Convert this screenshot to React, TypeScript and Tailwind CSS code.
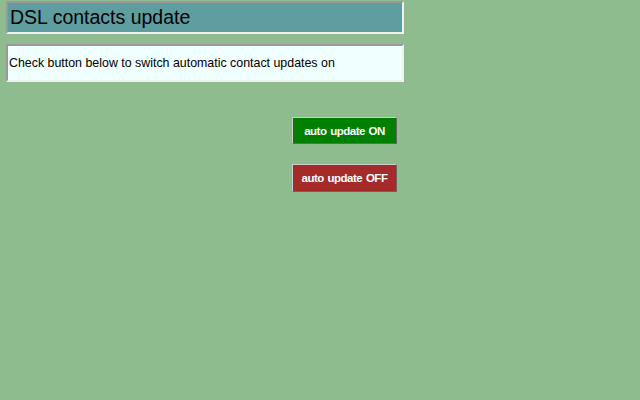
export default function App() {
  return (
    <div className="w-[640px] h-[400px] bg-[#8fbc8f] pl-[6px] pt-[1px] font-['Liberation_Sans',Arial,sans-serif]">
      <div className="w-[398px] flex flex-col">
        <div className="h-[33px] bg-[#5f9ea0] border-2 border-t-[#999999] border-l-[#999999] border-b-[#f0f0f0] border-r-[#f0f0f0] flex items-center pl-[2px]">
          <h1 className="text-[19.5px] leading-none text-black">DSL contacts update</h1>
        </div>
        <div className="mt-[10px] h-[38px] bg-[#f0ffff] border-2 border-t-[#999999] border-l-[#999999] border-b-[#f0f0f0] border-r-[#f0f0f0] flex items-center pl-[1px]">
          <p className="text-[12.4px] leading-none text-black">
            Check button below to switch automatic contact updates on
          </p>
        </div>
        <div className="mt-[35px] flex flex-col items-end pr-[7px] gap-[20px]">
          <button className="w-[105px] h-[27px] bg-[#008000] text-white text-[11.5px] tracking-[-0.5px] [word-spacing:1px] font-bold border border-t-[#cccccc] border-l-[#cccccc] border-b-[#666666] border-r-[#666666] pt-[2px]">
            auto update ON
          </button>
          <button className="w-[105px] h-[28px] bg-[#a52a2a] text-white text-[11.5px] tracking-[-0.5px] [word-spacing:1px] font-bold border border-t-[#cccccc] border-l-[#cccccc] border-b-[#666666] border-r-[#666666] pt-[2px]">
            auto update OFF
          </button>
        </div>
      </div>
    </div>
  );
}
